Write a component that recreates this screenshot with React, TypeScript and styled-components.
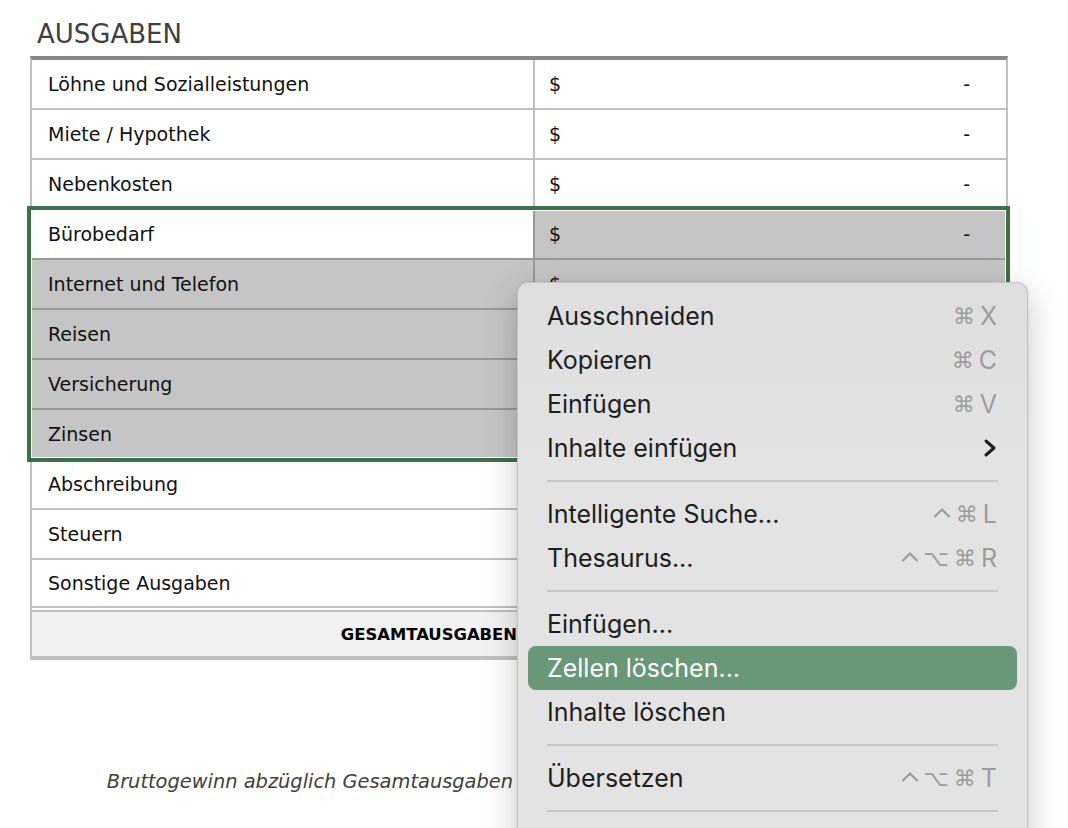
import React from 'react';
import styled, { createGlobalStyle } from 'styled-components';

const GlobalStyle = createGlobalStyle`
  html, body {
    margin: 0;
    padding: 0;
    height: 100%;
    overflow: hidden;
    background: #fff;
  }
  body {
    font-family: "DejaVu Sans", "Liberation Sans", sans-serif;
  }
`;

const Page = styled.div`
  position: relative;
  width: 1068px;
  height: 828px;
  overflow: hidden;
  padding-left: 30px;
  box-sizing: border-box;
`;

const Title = styled.h1`
  margin: 0 0 7px 7px;
  padding-top: 19px;
  font-size: 26px;
  line-height: 30px;
  font-weight: normal;
  color: #404040;
`;

const Sheet = styled.div`
  width: 978px;
  box-sizing: border-box;
  border-top: 4px solid #888;
  border-left: 2px solid #c0c0c0;
  border-right: 2px solid #c0c0c0;
`;

const Row = styled.div<{ $picked?: boolean; $double?: boolean }>`
  display: grid;
  grid-template-columns: 503px 1fr;
  height: ${p => (p.$double ? 52 : 50)}px;
  box-sizing: border-box;
  border-bottom: ${p =>
    p.$double ? '6px double #c0c0c0' : `2px solid ${p.$picked ? '#999' : '#c0c0c0'}`};
`;

const Label = styled.div<{ $picked?: boolean; $active?: boolean }>`
  display: flex;
  align-items: center;
  padding-left: 16px;
  font-size: 19px;
  color: #111;
  background: ${p => (p.$picked && !p.$active ? '#c5c5c5' : '#fff')};
  border-right: 2px solid ${p => (p.$picked ? '#999' : '#c0c0c0')};
`;

const Money = styled.div<{ $picked?: boolean; $bold?: boolean }>`
  display: flex;
  align-items: center;
  justify-content: space-between;
  padding: 0 36px 0 14px;
  font-size: 19px;
  font-weight: ${p => (p.$bold ? 'bold' : 'normal')};
  color: #111;
  background: ${p => (p.$picked ? '#c5c5c5' : 'transparent')};
`;

const Selection = styled.div`
  position: relative;

  &::after {
    content: '';
    position: absolute;
    top: -4px;
    left: -5px;
    right: -4px;
    bottom: -2px;
    border: 4px solid #3d7149;
    box-shadow: inset 0 0 0 1px #fff;
    pointer-events: none;
  }
`;

const TotalRow = styled.div`
  display: grid;
  grid-template-columns: 503px 1fr;
  height: 48px;
  box-sizing: border-box;
  background: #f2f2f2;
  border-bottom: 4px solid #c0c0c0;
`;

const TotalLabel = styled.div`
  display: flex;
  align-items: center;
  justify-content: flex-end;
  padding-right: 16px;
  font-size: 16.4px;
  font-weight: bold;
  color: #000;
  border-right: 2px solid #c0c0c0;
`;

const Note = styled.div`
  width: 503px;
  margin-top: 110px;
  padding-right: 20px;
  box-sizing: border-box;
  text-align: right;
  font-size: 19.4px;
  line-height: 24px;
  font-style: italic;
  color: #404040;
`;

const Menu = styled.div`
  position: absolute;
  left: 517px;
  top: 282px;
  width: 511px;
  height: 620px;
  box-sizing: border-box;
  padding: 11px 10px;
  border-radius: 11px;
  background: linear-gradient(#dedede, #e3e3e3 30%);
  border: 1px solid rgba(0, 0, 0, 0.13);
  box-shadow: 0 10px 34px rgba(0, 0, 0, 0.22), 0 0 3px rgba(0, 0, 0, 0.08);
  font-family: Inter, "Noto Sans", sans-serif;
`;

const Item = styled.div<{ $hot?: boolean }>`
  display: flex;
  align-items: center;
  justify-content: space-between;
  height: 44px;
  padding: 0 20px 0 19px;
  border-radius: 8px;
  font-size: 25px;
  color: ${p => (p.$hot ? '#fff' : '#1e1e1e')};
  background: ${p => (p.$hot ? '#699878' : 'transparent')};
`;

const Keys = styled.span`
  display: flex;
  align-items: center;
  gap: 5px;
  color: #9c9c9c;
`;

const Glyph = styled.span`
  font-family: "DejaVu Sans", sans-serif;
  font-size: 22px;
`;

const CtrlMark = styled.svg`
  width: 18px;
  height: 20px;
  align-self: flex-start;
  margin-top: 8px;
`;

const Separator = styled.div`
  height: 22px;
  margin: 0 19px;
  display: flex;
  align-items: center;

  &::before {
    content: '';
    flex: 1;
    height: 2px;
    background: #c7c7c7;
  }
`;

const Chevron = () => (
  <svg width="14" height="20" viewBox="0 0 14 20">
    <polyline points="3,3 11,10 3,17" fill="none" stroke="#1e1e1e" strokeWidth="3" strokeLinecap="round" strokeLinejoin="round" />
  </svg>
);

const Ctrl = () => (
  <CtrlMark viewBox="0 0 18 20">
    <polyline points="1.5,10 9,2.5 16.5,10" fill="none" stroke="#9c9c9c" strokeWidth="2.2" strokeLinejoin="miter" />
  </CtrlMark>
);

type Line = { label: string };

const topRows: Line[] = [
  { label: 'Löhne und Sozialleistungen' },
  { label: 'Miete / Hypothek' },
  { label: 'Nebenkosten' },
];

const pickedRows: Line[] = [
  { label: 'Bürobedarf' },
  { label: 'Internet und Telefon' },
  { label: 'Reisen' },
  { label: 'Versicherung' },
  { label: 'Zinsen' },
];

const lowerRows: Line[] = [
  { label: 'Abschreibung' },
  { label: 'Steuern' },
  { label: 'Sonstige Ausgaben' },
];

type Entry =
  | { kind: 'item'; text: string; keys?: string[]; sub?: boolean; hot?: boolean }
  | { kind: 'sep' };

const menu: Entry[] = [
  { kind: 'item', text: 'Ausschneiden', keys: ['⌘', 'X'] },
  { kind: 'item', text: 'Kopieren', keys: ['⌘', 'C'] },
  { kind: 'item', text: 'Einfügen', keys: ['⌘', 'V'] },
  { kind: 'item', text: 'Inhalte einfügen', sub: true },
  { kind: 'sep' },
  { kind: 'item', text: 'Intelligente Suche...', keys: ['ctrl', '⌘', 'L'] },
  { kind: 'item', text: 'Thesaurus...', keys: ['ctrl', '⌥', '⌘', 'R'] },
  { kind: 'sep' },
  { kind: 'item', text: 'Einfügen...' },
  { kind: 'item', text: 'Zellen löschen...', hot: true },
  { kind: 'item', text: 'Inhalte löschen' },
  { kind: 'sep' },
  { kind: 'item', text: 'Übersetzen', keys: ['ctrl', '⌥', '⌘', 'T'] },
  { kind: 'sep' },
];

const renderKey = (k: string, j: number) => {
  if (k === 'ctrl') return <Ctrl key={j} />;
  if (k.charCodeAt(0) > 0x2000) return <Glyph key={j}>{k}</Glyph>;
  return <span key={j}>{k}</span>;
};

const App: React.FC = () => {
  return (
    <>
      <GlobalStyle />
      <Page>
        <Title>AUSGABEN</Title>
        <Sheet>
          {topRows.map(r => (
            <Row key={r.label}>
              <Label>{r.label}</Label>
              <Money><span>$</span><span>-</span></Money>
            </Row>
          ))}
          <Selection>
            {pickedRows.map((r, i) => (
              <Row key={r.label} $picked>
                <Label $picked $active={i === 0}>{r.label}</Label>
                <Money $picked><span>$</span><span>-</span></Money>
              </Row>
            ))}
          </Selection>
          {lowerRows.map((r, i) => (
            <Row key={r.label} $double={i === lowerRows.length - 1}>
              <Label>{r.label}</Label>
              <Money><span>$</span><span>-</span></Money>
            </Row>
          ))}
          <TotalRow>
            <TotalLabel>GESAMTAUSGABEN</TotalLabel>
            <Money $bold><span>$</span><span>-</span></Money>
          </TotalRow>
        </Sheet>
        <Note>Bruttogewinn abzüglich Gesamtausgaben</Note>

        <Menu>
          {menu.map((e, i) =>
            e.kind === 'sep' ? (
              <Separator key={i} />
            ) : (
              <Item key={i} $hot={e.hot}>
                <span>{e.text}</span>
                {e.keys && <Keys>{e.keys.map(renderKey)}</Keys>}
                {e.sub && <Chevron />}
              </Item>
            )
          )}
        </Menu>
      </Page>
    </>
  );
};

export default App;
